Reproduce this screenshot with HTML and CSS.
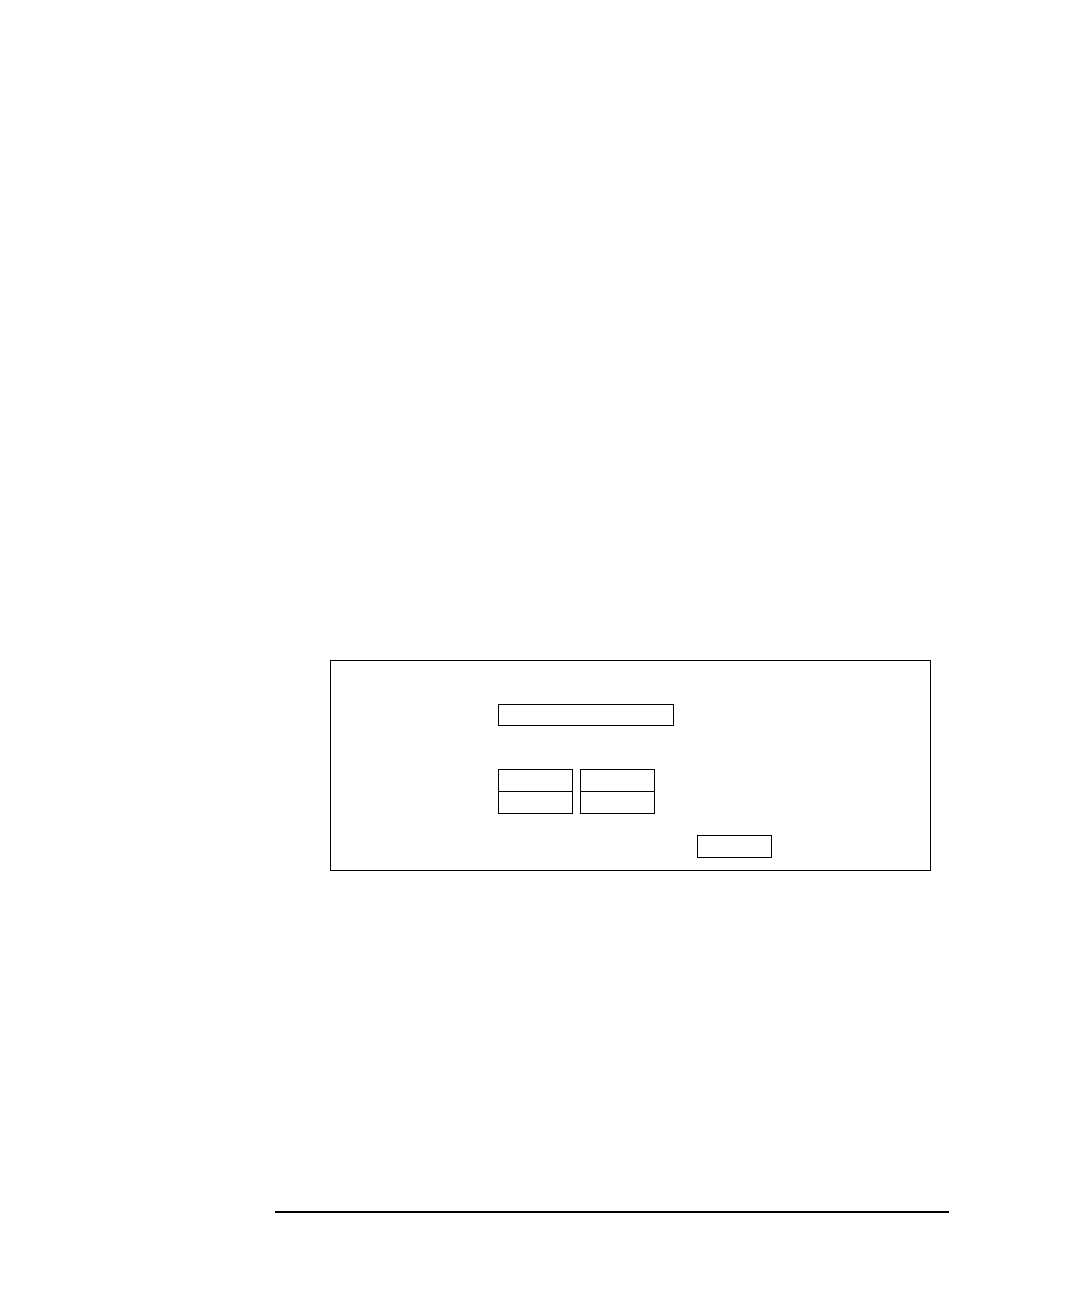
FILE: index.html
```html
<!DOCTYPE html>
<html lang="en">
<head>
<meta charset="UTF-8">
<meta name="viewport" content="width=device-width, initial-scale=1.0">
<title>Form</title>
<link rel="stylesheet" href="styles.css">
</head>
<body>

<main class="page">
<form class="panel">
<input type="text" class="field field-wide" aria-label="Name">

<div class="pairs">
<input type="text" class="field" aria-label="Row 1, first value">
<input type="text" class="field" aria-label="Row 1, second value">
<input type="text" class="field" aria-label="Row 2, first value">
<input type="text" class="field" aria-label="Row 2, second value">
</div>

<input type="text" class="field field-last" aria-label="Result">
</form>

<hr class="rule">
</main>

</body>
</html>
```
FILE: styles.css
```css
* {
box-sizing: border-box;
}

body {
margin: 0;
background-color: #fff;
font-family: "Liberation Sans", Arial, sans-serif;
}

.page {
display: flex;
flex-direction: column;
min-height: 100vh;
padding: 660px 129px 83px 275px;
}

.panel {
display: flex;
flex-direction: column;
align-items: flex-start;
margin: 0 18px 0 55px;
padding: 43px 12px 12px 167px;
border: 1px solid #000;
}

.field {
width: 75px;
height: 23px;
margin: 0;
padding: 2px 4px;
border: 1px solid #000;
border-radius: 0;
background-color: #fff;
font-family: inherit;
font-size: 12px;
}

.field-wide {
width: 176px;
height: 22px;
}

/* the two rows share a border line */
.pairs {
display: grid;
grid-template-columns: 75px 75px;
grid-auto-rows: 22px;
column-gap: 7px;
margin-top: 43px;
padding-bottom: 1px;
}

.field-last {
margin-top: 21px;
margin-left: 199px;
}

.rule {
width: 100%;
height: 2px;
margin: auto 0 0;
border: 0;
background-color: #000;
}
```
